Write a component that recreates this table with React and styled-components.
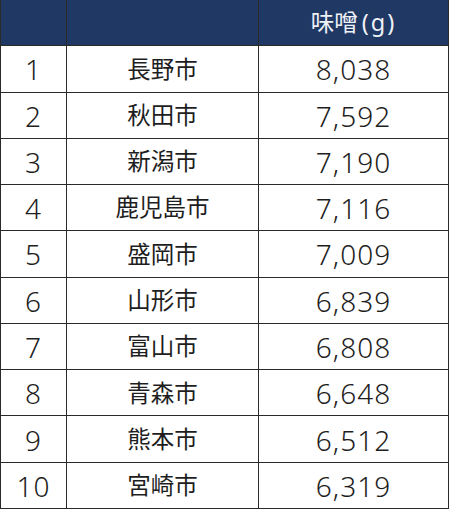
import React from "react";
import styled, { createGlobalStyle } from "styled-components";

const Global = createGlobalStyle`
  html, body { margin: 0; padding: 0; background: #ffffff; }
  body { font-family: "Noto Sans", "Noto Sans CJK JP", sans-serif; }
`;

const Table = styled.div`
  display: grid;
  grid-template-columns: 66px 192px 190px;
  grid-template-rows: repeat(11, 1fr);
  width: 449px;
  height: 509px;
  box-sizing: border-box;
  border-left: 1px solid #2a2a2a;
  color: #1e1e1e;
`;

const Cell = styled.div`
  display: flex;
  align-items: center;
  justify-content: center;
  box-sizing: border-box;
  border-right: 1px solid #2a2a2a;
  border-bottom: 1px solid #2a2a2a;
  background: ${(p) => (p.$head ? "#1f3864" : "#ffffff")};
  color: ${(p) => (p.$head ? "#eef1f7" : "#1e1e1e")};
  font-family: "Noto Sans", "Noto Sans CJK JP", sans-serif;
  font-size: ${(p) => (p.$num ? "28px" : "23.5px")};
  font-weight: ${(p) => (p.$num ? 300 : 400)};
  letter-spacing: ${(p) => (p.$num ? "1px" : "0")};
  line-height: 1;
  padding-top: 1px;
`;

const Unit = styled.span`
  letter-spacing: 2px;
  margin-left: 4px;
`;

const rows = [
  ["1", "長野市", "8,038"],
  ["2", "秋田市", "7,592"],
  ["3", "新潟市", "7,190"],
  ["4", "鹿児島市", "7,116"],
  ["5", "盛岡市", "7,009"],
  ["6", "山形市", "6,839"],
  ["7", "富山市", "6,808"],
  ["8", "青森市", "6,648"],
  ["9", "熊本市", "6,512"],
  ["10", "宮崎市", "6,319"],
];

export default function App() {
  return (
    <>
      <Global />
      <Table>
        <Cell $head />
        <Cell $head />
        <Cell $head>
          味噌<Unit>(g)</Unit>
        </Cell>
        {rows.map(([r, c, v]) => (
          <React.Fragment key={r}>
            <Cell $num>{r}</Cell>
            <Cell>{c}</Cell>
            <Cell $num>{v}</Cell>
          </React.Fragment>
        ))}
      </Table>
    </>
  );
}
